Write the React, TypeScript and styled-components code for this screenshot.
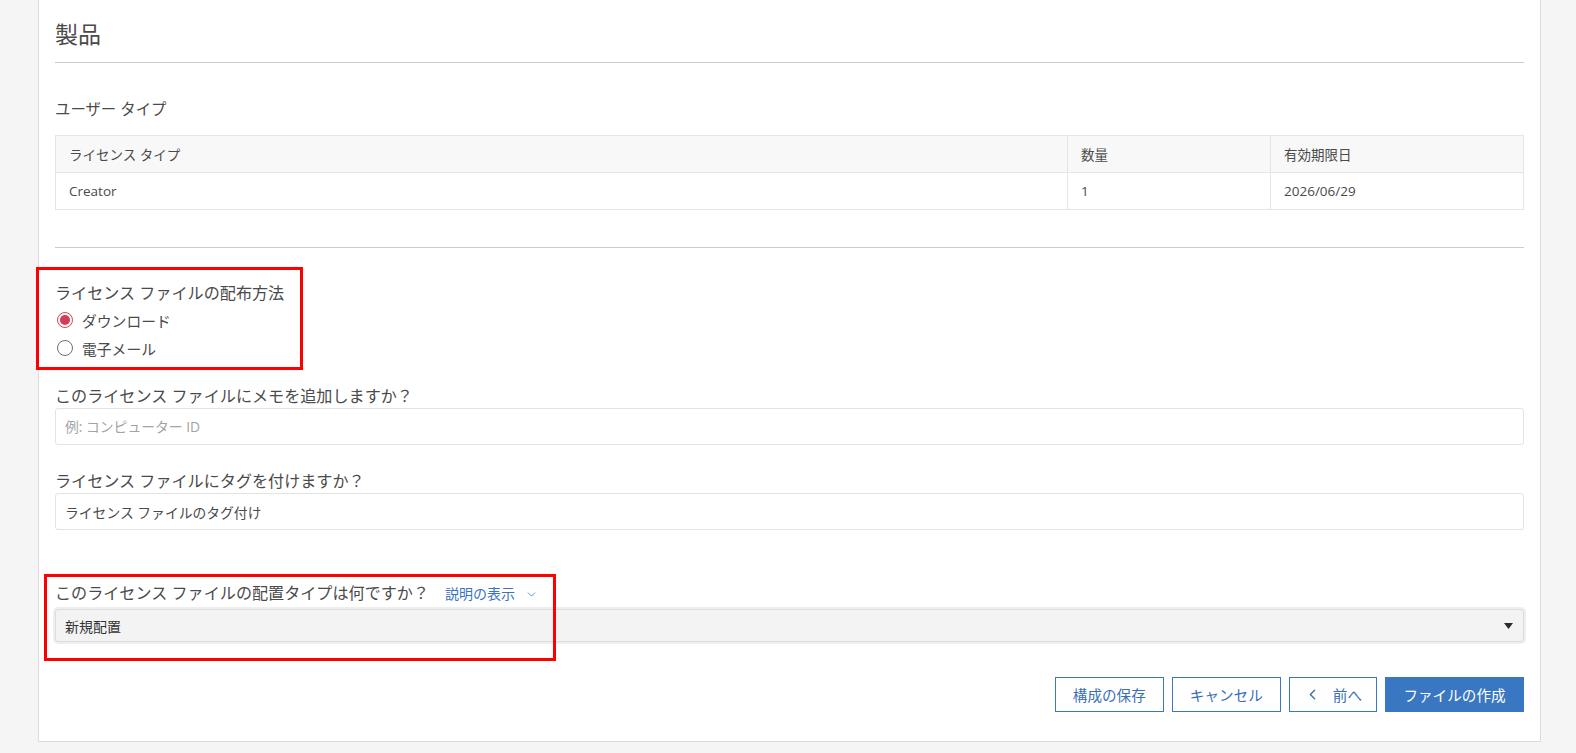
import React, { useState } from "react";
import styled, { createGlobalStyle } from "styled-components";
import { ChevronDown, ChevronLeft } from "lucide-react";

const GlobalStyle = createGlobalStyle`
  html, body {
    margin: 0;
    padding: 0;
    background: #f5f5f5;
  }
  body {
    font-family: "Open Sans", "Noto Sans CJK JP", sans-serif;
    color: #4a4a4a;
  }
`;

interface LicenseRow {
  type: string;
  count: number;
  expires: string;
}

const rows: LicenseRow[] = [{ type: "Creator", count: 1, expires: "2026/06/29" }];

export default function App() {
  const [delivery, setDelivery] = useState("download");

  return (
    <>
      <GlobalStyle />
      <Card>
        <Title>製品</Title>
        <Rule />

        <SectionLabel>ユーザー タイプ</SectionLabel>
        <Table>
          <colgroup>
            <col style={{ width: 1012 }} />
            <col style={{ width: 203 }} />
            <col />
          </colgroup>
          <thead>
            <tr>
              <HeadCell>ライセンス タイプ</HeadCell>
              <HeadCell>数量</HeadCell>
              <HeadCell>有効期限日</HeadCell>
            </tr>
          </thead>
          <tbody>
            {rows.map((r) => (
              <tr key={r.type}>
                <Cell>{r.type}</Cell>
                <Cell>{r.count}</Cell>
                <Cell>{r.expires}</Cell>
              </tr>
            ))}
          </tbody>
        </Table>
        <Rule $top={37} />

        <Highlight $top={15} $left={19} $width={267} $bottom={8} $gap={34}>
          <FieldLabel>ライセンス ファイルの配布方法</FieldLabel>
          <RadioList>
            <RadioRow onClick={() => setDelivery("download")}>
              <RadioDot $checked={delivery === "download"} />
              ダウンロード
            </RadioRow>
            <RadioRow onClick={() => setDelivery("email")}>
              <RadioDot $checked={delivery === "email"} />
              電子メール
            </RadioRow>
          </RadioList>
        </Highlight>

        <Field $gap={23}>
          <FieldLabel>このライセンス ファイルにメモを追加しますか？</FieldLabel>
          <TextInput placeholder="例: コンピューター ID" />
        </Field>

        <Field $gap={25}>
          <FieldLabel>ライセンス ファイルにタグを付けますか？</FieldLabel>
          <TextInput defaultValue="ライセンス ファイルのタグ付け" />
        </Field>

        <Highlight $top={8} $left={11} $width={512} $bottom={19} $gap={52}>
          <LabelRow>
            <FieldLabel>このライセンス ファイルの配置タイプは何ですか？</FieldLabel>
            <HelpLink>
              説明の表示
              <ChevronDown size={13} strokeWidth={1.6} />
            </HelpLink>
          </LabelRow>
          <SelectBox>
            <span>新規配置</span>
            <svg width="9" height="6" viewBox="0 0 9 6">
              <polygon points="0,0 9,0 4.5,6" fill="#2b2b2b" />
            </svg>
          </SelectBox>
        </Highlight>

        <Actions>
          <OutlineButton>構成の保存</OutlineButton>
          <OutlineButton>キャンセル</OutlineButton>
          <OutlineButton $narrow>
            <ChevronLeft size={17} strokeWidth={2} />
            前へ
          </OutlineButton>
          <PrimaryButton>ファイルの作成</PrimaryButton>
        </Actions>
      </Card>
    </>
  );
}

const Card = styled.div`
  margin-left: 38px;
  width: 1503px;
  box-sizing: border-box;
  background: #fff;
  border: 1px solid #dcdcdc;
  border-top: none;
  padding: 17px 16px 29px 16px;
`;

const Title = styled.h2`
  margin: 0;
  font-family: "Noto Sans CJK JP", sans-serif;
  font-size: 23px;
  line-height: 32px;
  font-weight: 400;
  color: #4a4a4a;
`;

const Rule = styled.hr<{ $top?: number }>`
  margin: ${(p) => p.$top ?? 13}px 0 0 0;
  border: none;
  border-top: 1px solid #cbcbcb;
  height: 0;
`;

const SectionLabel = styled.div`
  margin-top: 36px;
  font-size: 15.4px;
  line-height: 22px;
  color: #4a4a4a;
`;

const Table = styled.table`
  margin-top: 14px;
  width: 100%;
  border-collapse: collapse;
  table-layout: fixed;
  font-size: 13.5px;
`;

const HeadCell = styled.th`
  height: 36px;
  padding: 0 13px;
  text-align: left;
  font-weight: 400;
  background: #f8f8f8;
  border: 1px solid #e6e6e6;
  color: #4a4a4a;
`;

const Cell = styled.td`
  height: 36px;
  padding: 0 13px;
  border: 1px solid #e6e6e6;
  color: #4a4a4a;
`;

const Highlight = styled.div<{
  $top: number;
  $left: number;
  $width: number;
  $bottom: number;
  $gap: number;
}>`
  position: relative;
  margin-top: ${(p) => p.$gap}px;

  &::after {
    content: "";
    position: absolute;
    top: -${(p) => p.$top}px;
    left: -${(p) => p.$left}px;
    width: ${(p) => p.$width}px;
    bottom: -${(p) => p.$bottom}px;
    box-sizing: border-box;
    border: 3px solid #ff0000;
    pointer-events: none;
  }
`;

const FieldLabel = styled.div`
  font-size: 16.1px;
  line-height: 22px;
  color: #4a4a4a;
`;

const RadioList = styled.div`
  margin-top: 2px;
  display: flex;
  flex-direction: column;
`;

const RadioRow = styled.label`
  display: flex;
  align-items: center;
  gap: 9px;
  height: 28px;
  padding-left: 2px;
  font-size: 14.8px;
  color: #4a4a4a;
  cursor: pointer;
`;

const RadioDot = styled.span<{ $checked: boolean }>`
  width: 16px;
  height: 16px;
  box-sizing: border-box;
  border-radius: 50%;
  border: 1px solid ${(p) => (p.$checked ? "#d8465c" : "#6e6e6e")};
  display: flex;
  align-items: center;
  justify-content: center;

  &::before {
    content: "";
    width: 10px;
    height: 10px;
    border-radius: 50%;
    background: ${(p) => (p.$checked ? "#d83b55" : "transparent")};
  }
`;

const Field = styled.div<{ $gap: number }>`
  margin-top: ${(p) => p.$gap}px;
`;

const TextInput = styled.input`
  display: block;
  margin-top: 1px;
  width: 100%;
  height: 37px;
  box-sizing: border-box;
  border: 1px solid #e3e3e3;
  border-radius: 3px;
  padding: 0 9px;
  font-family: "Open Sans", "Noto Sans CJK JP", sans-serif;
  font-size: 13.8px;
  color: #4a4a4a;
  background: #fff;
  outline: none;

  &::placeholder {
    color: #a3a3a3;
  }
`;

const LabelRow = styled.div`
  display: flex;
  align-items: center;
  gap: 16px;
`;

const HelpLink = styled.span`
  display: inline-flex;
  align-items: center;
  gap: 10px;
  font-size: 14px;
  color: #3a74c0;
  cursor: pointer;

  svg {
    color: #4a80cc;
    margin-top: 2px;
  }
`;

const SelectBox = styled.div`
  margin-top: 5px;
  height: 33px;
  box-sizing: border-box;
  display: flex;
  align-items: center;
  justify-content: space-between;
  padding: 0 10px 0 9px;
  background: #f3f3f3;
  border: 1px solid #dcdcdc;
  border-radius: 3px;
  box-shadow: 0 0 0 2px #efefef;
  font-size: 14px;
  color: #333;
`;

const Actions = styled.div`
  margin-top: 35px;
  display: flex;
  justify-content: flex-end;
  gap: 8px;
`;

const OutlineButton = styled.button<{ $narrow?: boolean }>`
  height: 35px;
  min-width: ${(p) => (p.$narrow ? 84 : 109)}px;
  box-sizing: border-box;
  display: inline-flex;
  align-items: center;
  justify-content: center;
  gap: 12px;
  padding: 0 14px;
  background: #fff;
  border: 1px solid #3a77c2;
  font-family: "Open Sans", "Noto Sans CJK JP", sans-serif;
  font-size: 14.6px;
  color: #3a6fb6;
  cursor: pointer;
`;

const PrimaryButton = styled.button`
  height: 35px;
  width: 139px;
  box-sizing: border-box;
  border: 1px solid #3a77c2;
  background: #3a77c2;
  color: #fff;
  font-family: "Open Sans", "Noto Sans CJK JP", sans-serif;
  font-size: 14.6px;
  cursor: pointer;
`;
